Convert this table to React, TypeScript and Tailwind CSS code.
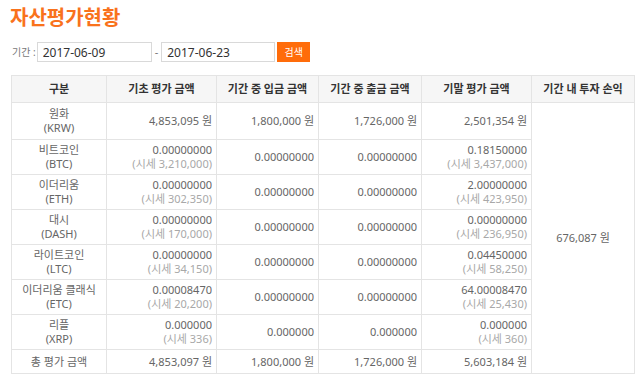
import React from "react";

// 자산평가현황 - asset valuation summary for a date range

type Row = {
  name: string;
  code: string;
  start: string;
  startPrice?: string;
  deposit: string;
  withdraw: string;
  end: string;
  endPrice?: string;
};

const ROWS: Row[] = [
  { name: "원화", code: "KRW", start: "4,853,095 원", deposit: "1,800,000 원", withdraw: "1,726,000 원", end: "2,501,354 원" },
  { name: "비트코인", code: "BTC", start: "0.00000000", startPrice: "3,210,000", deposit: "0.00000000", withdraw: "0.00000000", end: "0.18150000", endPrice: "3,437,000" },
  { name: "이더리움", code: "ETH", start: "0.00000000", startPrice: "302,350", deposit: "0.00000000", withdraw: "0.00000000", end: "2.00000000", endPrice: "423,950" },
  { name: "대시", code: "DASH", start: "0.00000000", startPrice: "170,000", deposit: "0.00000000", withdraw: "0.00000000", end: "0.00000000", endPrice: "236,950" },
  { name: "라이트코인", code: "LTC", start: "0.00000000", startPrice: "34,150", deposit: "0.00000000", withdraw: "0.00000000", end: "0.04450000", endPrice: "58,250" },
  { name: "이더리움 클래식", code: "ETC", start: "0.00008470", startPrice: "20,200", deposit: "0.00000000", withdraw: "0.00000000", end: "64.00008470", endPrice: "25,430" },
  { name: "리플", code: "XRP", start: "0.000000", startPrice: "336", deposit: "0.000000", withdraw: "0.000000", end: "0.000000", endPrice: "360" },
];

const HEADERS = ["구분", "기초 평가 금액", "기간 중 입금 금액", "기간 중 출금 금액", "기말 평가 금액", "기간 내 투자 손익"];

const cell = "border border-[#e4e4e4] px-[4px] py-0 align-middle";

function Amount({ value, price }: { value: string; price?: string }) {
  return (
    <div className="flex flex-col items-end">
      <span>{value}</span>
      {price && <span className="text-[#a8a8a8]">(시세 {price})</span>}
    </div>
  );
}

export default function App() {
  return (
    <div
      className="min-h-[382px] w-[640px] bg-white pl-[10px] pt-[4px] text-[11px] leading-[14px] text-[#666]"
      style={{ fontFamily: '"Noto Sans", "Noto Sans CJK KR", sans-serif' }}
    >
      <h1 className="text-[20px] font-bold leading-[28px] text-[#f9721c]">자산평가현황</h1>

      <div className="mt-[10px] flex items-center">
        <span className="ml-[2px] mr-[1px] text-[10px] text-[#777]">기간 :</span>
        <input
          type="text"
          defaultValue="2017-06-09"
          className="h-[20px] w-[115px] border border-[#d9d9d9] px-[5px] text-[12px] text-[#333] outline-none"
        />
        <span className="mx-[3px] text-[#777]">-</span>
        <input
          type="text"
          defaultValue="2017-06-23"
          className="h-[20px] w-[114px] border border-[#d9d9d9] px-[5px] text-[12px] text-[#333] outline-none"
        />
        <button
          type="button"
          className="ml-[2px] h-[20px] w-[33px] bg-[#ff6c0a] text-[10px] text-white"
        >
          검색
        </button>
      </div>

      <table className="mt-[13px] ml-[1px] w-[623px] table-fixed border-collapse text-[11px]">
        <colgroup>
          <col className="w-[95px]" />
          <col className="w-[110px]" />
          <col className="w-[102px]" />
          <col className="w-[103px]" />
          <col className="w-[110px]" />
          <col className="w-[103px]" />
        </colgroup>
        <thead>
          <tr className="h-[27px] bg-[#f6f6f6]">
            {HEADERS.map((h) => (
              <th key={h} className={`${cell} text-center font-bold text-[#333]`}>
                {h}
              </th>
            ))}
          </tr>
        </thead>
        <tbody>
          {ROWS.map((r, i) => (
            <tr key={r.code} className={i === 0 ? "h-[37px]" : "h-[35px]"}>
              <td className={`${cell} text-center`}>
                <div>{r.name}</div>
                <div>({r.code})</div>
              </td>
              <td className={`${cell} text-right`}>
                <Amount value={r.start} price={r.startPrice} />
              </td>
              <td className={`${cell} text-right`}>{r.deposit}</td>
              <td className={`${cell} text-right`}>{r.withdraw}</td>
              <td className={`${cell} text-right`}>
                <Amount value={r.end} price={r.endPrice} />
              </td>
              {i === 0 && (
                <td rowSpan={8} className={`${cell} text-center`}>
                  676,087 원
                </td>
              )}
            </tr>
          ))}
          <tr className="h-[24px]">
            <td className={`${cell} text-center`}>총 평가 금액</td>
            <td className={`${cell} text-right`}>4,853,097 원</td>
            <td className={`${cell} text-right`}>1,800,000 원</td>
            <td className={`${cell} text-right`}>1,726,000 원</td>
            <td className={`${cell} text-right`}>5,603,184 원</td>
          </tr>
        </tbody>
      </table>
    </div>
  );
}
